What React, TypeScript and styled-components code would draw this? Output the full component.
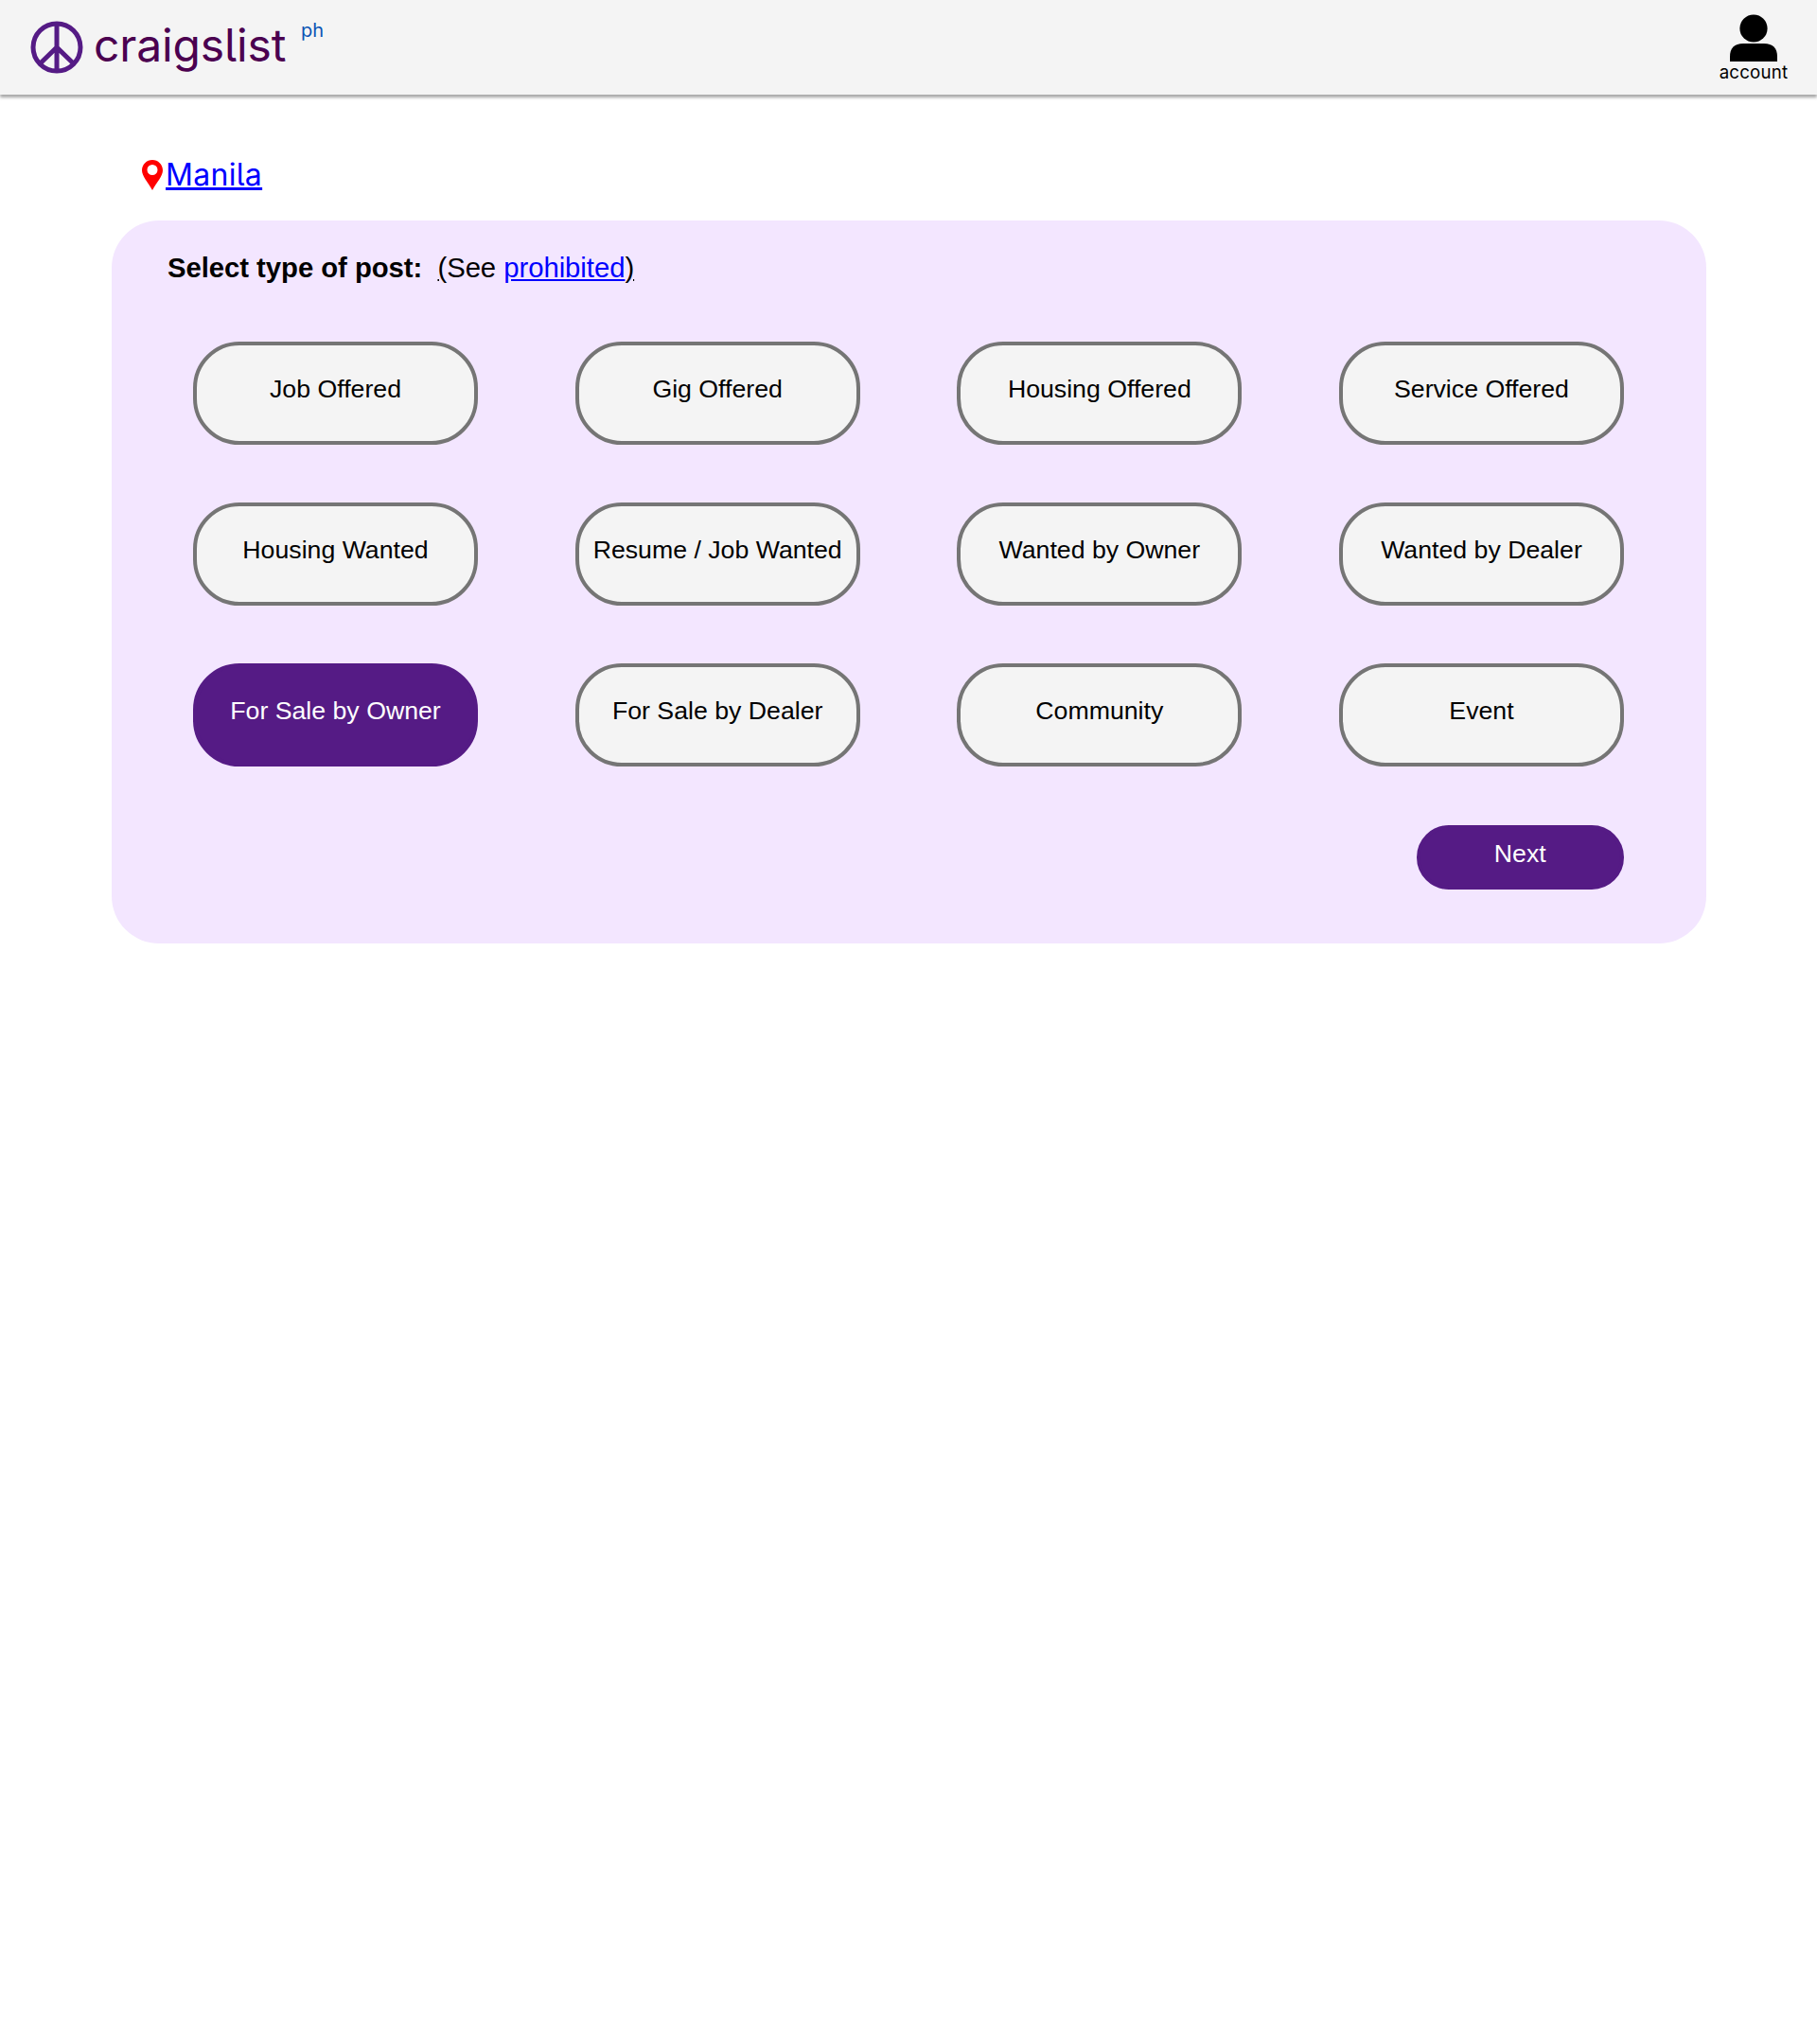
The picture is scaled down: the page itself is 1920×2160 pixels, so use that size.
import React, { useState } from 'react';
import styled, { createGlobalStyle } from 'styled-components';

const GlobalStyle = createGlobalStyle`
  * { box-sizing: border-box; }
  body { margin: 0; background: #fff; color: #000; font-family: 'Liberation Sans', Arial, sans-serif; }
`;

const Header = styled.header`
  display: flex;
  align-items: flex-start;
  height: 100px;
  padding: 0 30px 0 32px;
  background: #f4f4f4;
  box-shadow: 0 3px 3px rgba(0, 0, 0, 0.35);
`;

const PeaceIcon = styled.svg`
  flex: none;
  width: 56px;
  height: 56px;
  margin-top: 22px;
`;

const Wordmark = styled.span`
  margin: 18px 0 0 11px;
  width: 205px;
  white-space: nowrap;
  color: #4b0050;
  font: 400 48px/60px Inter, sans-serif;
  font-feature-settings: 'cv05' 1;
  letter-spacing: -0.15px;
`;

const Region = styled.span`
  margin: 19px auto 0 14px;
  color: #0b54b5;
  font: 400 20px/27px Inter, sans-serif;
`;

const Account = styled.a`
  display: flex;
  flex-direction: column;
  align-items: center;
  width: 74px;
  padding-top: 15px;
  font: 400 18.7px/24px Inter, sans-serif;
  letter-spacing: 0.2px;
`;

const PersonIcon = styled.svg`
  display: block;
  width: 50px;
  height: 50px;
`;

const Main = styled.main`
  width: 1685px;
  margin: 0 0 0 117.5px;
`;

const Location = styled.div`
  display: flex;
  align-items: flex-start;
  height: 133px;
  padding: 69px 0 0 32px;
`;

const PinIcon = styled.svg`
  width: 22px;
  height: 32px;
`;

const CityLink = styled.a`
  margin: -7px 0 0 3.5px;
  color: #00f;
  font: 400 32px/45px Inter, sans-serif;
  font-feature-settings: 'cv05' 1;
  letter-spacing: 0.3px;
  text-decoration: underline 3px;
  text-underline-offset: 2px;
`;

const Panel = styled.section`
  height: 764px;
  padding: 33px 86.5px 0;
  border-radius: 50px;
  background: #f3e6ff;
`;

const Heading = styled.h1`
  height: 95px;
  margin: 0 0 0 -27px;
  font-size: 29.3px;
  line-height: 34px;
  font-weight: 400;
  letter-spacing: -0.05px;
  white-space: pre;
`;

const Link = styled.a`
  color: #00f;
  text-decoration: underline;
`;

const Paren = styled.span`
  text-decoration: underline;
`;

const Choices = styled.div`
  display: grid;
  grid-template-columns: repeat(4, 301px);
  grid-auto-rows: 109px;
  justify-content: space-between;
  row-gap: 61px;
`;

const Pill = styled.button<{ $selected?: boolean }>`
  padding: 0 0 10px;
  border: 4px solid ${(p) => (p.$selected ? '#551b85' : '#757575')};
  border-radius: 49px;
  background: ${(p) => (p.$selected ? '#551b85' : '#f4f4f4')};
  color: ${(p) => (p.$selected ? '#fff' : '#000')};
  font: 400 26.7px/32px 'Liberation Sans', Arial, sans-serif;
  white-space: nowrap;
`;

const Actions = styled.div`
  display: flex;
  justify-content: flex-end;
  margin-top: 61.5px;
`;

const NextButton = styled(Pill)`
  width: 219.5px;
  height: 68.5px;
  padding-bottom: 8px;
  border-radius: 34px;
`;

const types = [
  'Job Offered', 'Gig Offered', 'Housing Offered', 'Service Offered',
  'Housing Wanted', 'Resume / Job Wanted', 'Wanted by Owner', 'Wanted by Dealer',
  'For Sale by Owner', 'For Sale by Dealer', 'Community', 'Event',
];

export default function App() {
  const [selected, setSelected] = useState('For Sale by Owner');
  return (
    <>
      <GlobalStyle />
      <Header>
        <PeaceIcon viewBox="0 0 56 56" fill="none" stroke="#551b85" strokeWidth="5">
          <circle cx="28" cy="28" r="25" />
          <path d="M28 3v50M28 28L10 45.5M28 28l18 17.5" />
        </PeaceIcon>
        <Wordmark>craigslist</Wordmark>
        <Region>ph</Region>
        <Account>
          <PersonIcon viewBox="0 0 50 50">
            <circle cx="25" cy="15" r="14.6" />
            <path d="M0 50V45Q0 31 14 31H36Q50 31 50 45V50Z" />
          </PersonIcon>
          account
        </Account>
      </Header>
      <Main>
        <Location>
          <PinIcon viewBox="0 0 22 32">
            <path fill="#f00" fillRule="evenodd" d="M11 0C5 0 0 4.8 0 11c0 6 6 12 11 21 5-9 11-15 11-21C22 4.800 17 0 11 0Zm0 5a5.500 5.500 0 1 1 0 11 5.500 5.500 0 0 1 0-11Z" />
          </PinIcon>
          <CityLink>Manila</CityLink>
        </Location>
        <Panel>
          <Heading>
            <b>Select type of post:</b>{'  '}<Paren>(</Paren>See <Link>prohibited</Link><Paren>)</Paren>
          </Heading>
          <Choices>
            {types.map((type) => (
              <Pill key={type} $selected={type === selected} onClick={() => setSelected(type)}>{type}</Pill>
            ))}
          </Choices>
          <Actions><NextButton $selected>Next</NextButton></Actions>
        </Panel>
      </Main>
    </>
  );
}
